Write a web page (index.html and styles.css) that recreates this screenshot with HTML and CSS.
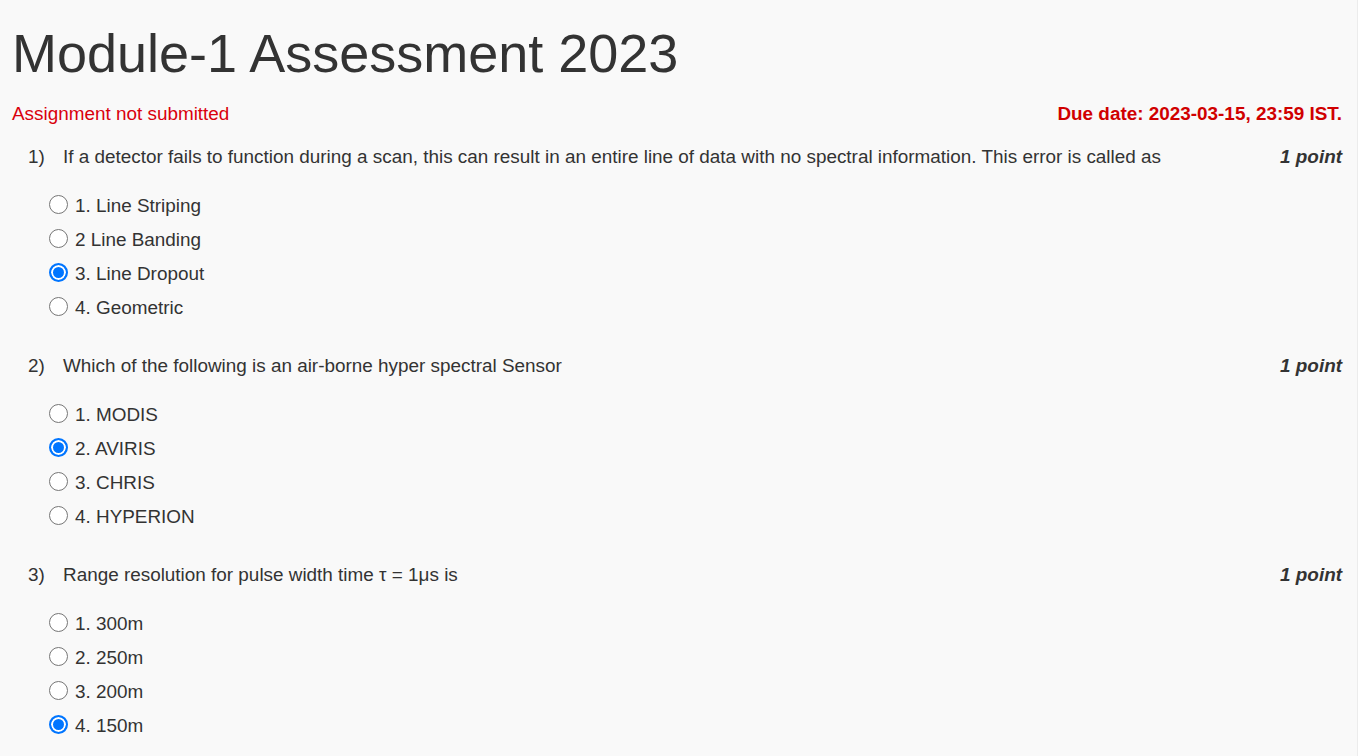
FILE: index.html
```html
<!DOCTYPE html>
<html lang="en">
<head>
<meta charset="utf-8">
<title>Module-1 Assessment 2023</title>
<link rel="stylesheet" href="styles.css">
</head>
<body>
<main class="page">
  <h1 class="title">Module-1 Assessment 2023</h1>
  <div class="status-row">
    <span class="status">Assignment not submitted</span>
    <span class="due">Due date: 2023-03-15, 23:59 IST.</span>
  </div>

  <section class="question">
    <div class="q-row">
      <span class="q-num">1)</span>
      <span class="q-text">If a detector fails to function during a scan, this can result in an entire line of data with no spectral information. This error is called as</span>
      <span class="q-points">1 point</span>
    </div>
    <div class="options">
      <label class="option"><input type="radio" name="q1"><span>1. Line Striping</span></label>
      <label class="option"><input type="radio" name="q1"><span>2 Line Banding</span></label>
      <label class="option"><input type="radio" name="q1" checked><span>3. Line Dropout</span></label>
      <label class="option"><input type="radio" name="q1"><span>4. Geometric</span></label>
    </div>
  </section>

  <section class="question">
    <div class="q-row">
      <span class="q-num">2)</span>
      <span class="q-text">Which of the following is an air-borne hyper spectral Sensor</span>
      <span class="q-points">1 point</span>
    </div>
    <div class="options">
      <label class="option"><input type="radio" name="q2"><span>1. MODIS</span></label>
      <label class="option"><input type="radio" name="q2" checked><span>2. AVIRIS</span></label>
      <label class="option"><input type="radio" name="q2"><span>3. CHRIS</span></label>
      <label class="option"><input type="radio" name="q2"><span>4. HYPERION</span></label>
    </div>
  </section>

  <section class="question">
    <div class="q-row">
      <span class="q-num">3)</span>
      <span class="q-text">Range resolution for pulse width time τ = 1μs is</span>
      <span class="q-points">1 point</span>
    </div>
    <div class="options">
      <label class="option"><input type="radio" name="q3"><span>1. 300m</span></label>
      <label class="option"><input type="radio" name="q3"><span>2. 250m</span></label>
      <label class="option"><input type="radio" name="q3"><span>3. 200m</span></label>
      <label class="option"><input type="radio" name="q3" checked><span>4. 150m</span></label>
    </div>
  </section>
</main>
</body>
</html>
```

FILE: styles.css
```css
html, body {
  margin: 0;
  padding: 0;
  background: #ffffff;
}

body {
  font-family: "Liberation Sans", Arial, sans-serif;
  color: #333333;
  font-size: 18.9px;
  overflow: hidden;
}

.page {
  width: 1358px;
  height: 756px;
  box-sizing: border-box;
  background: #f9f9f9;
  border-right: 1px solid #ececec;
  padding: 22px 15px 0 12px;
}

.title {
  margin: 0;
  font-size: 54px;
  font-weight: normal;
  line-height: 62px;
  color: #333333;
}

.status-row {
  display: flex;
  justify-content: space-between;
  align-items: center;
  margin-top: 18px;
  line-height: 24px;
}

.status {
  color: #d9000d;
}

.due {
  color: #d00000;
  font-weight: bold;
}

.question {
  margin-top: 19px;
}

.question + .question {
  margin-top: 29px;
}

.q-row {
  display: flex;
  align-items: flex-start;
  line-height: 24px;
  padding-left: 16px;
}

.q-num {
  width: 35px;
  flex: none;
}

.q-text {
  flex: 1;
}

.q-points {
  font-weight: bold;
  font-style: italic;
  flex: none;
}

.options {
  margin-top: 20px;
  padding-left: 37px;
  display: flex;
  flex-direction: column;
}

.option {
  display: flex;
  align-items: center;
  height: 34px;
  gap: 7px;
}

.option input {
  appearance: none;
  -webkit-appearance: none;
  box-sizing: border-box;
  margin: 0 0 3px 0;
  width: 19px;
  height: 19px;
  border: 1.5px solid #767676;
  border-radius: 50%;
  background: #ffffff;
  flex: none;
}

.option input:checked {
  border: 2px solid #0075ff;
  background: #0075ff;
  box-shadow: inset 0 0 0 2px #ffffff;
}
```
